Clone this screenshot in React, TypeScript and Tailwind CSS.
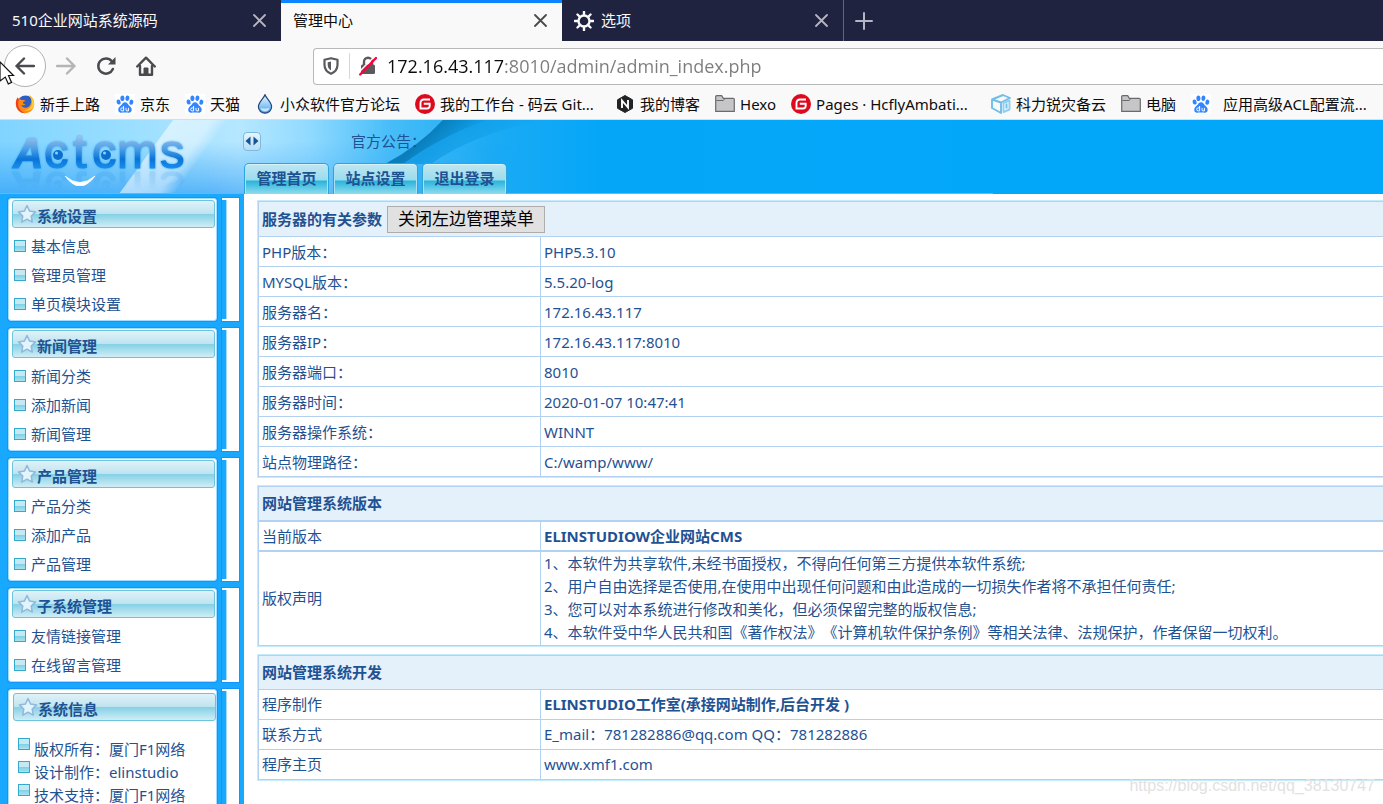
import React from "react";

function Close({ dark }: { dark?: boolean }) {
  return (
    <button aria-label="关闭标签页" className="flex size-5 items-center justify-center">
      <svg width="13" height="13" viewBox="0 0 13 13" stroke={dark ? "#4a4a4f" : "#b5b5c4"} strokeWidth="1.8" strokeLinecap="round">
        <path d="M1 1l11 11M12 1L1 12" />
      </svg>
    </button>
  );
}

function Firefox() {
  return (
    <svg width="20" height="20" viewBox="0 0 20 20">
      <circle cx="10.500" cy="9.500" r="8" fill="#2b5fc4" />
      <path d="M2.500 3.500C1 6 .6 8.500 1 11.200 1.800 16 5.600 19.200 10 19.200c5.200 0 9-4 9.200-9C19.300 6 17 2.500 13.500 1c2 2 2.900 4.300 2.700 6.800-.4 4-3 6.200-6 6-2.200-.2-3.600-1.400-4-3 1.500.9 3 .6 4.300-.4-1.300 0-2.700-.9-2.500-2.200.6-.8 1.800-.7 2.500-1.200-.6-.9-2.200-1.200-3.400-1C5.500 5.500 3.500 5 2.500 3.500z" fill="#ff8a16" />
      <path d="M13.500 1c2.800 2.200 4 5.500 3.300 9-.7 3.300-3.600 6-7.500 6.200 4.500 1.500 9.500-1 9.900-6C19.400 6 17 2.500 13.500 1z" fill="#ffcb2e" />
      <path d="M2.500 3.500C1 6 .6 8.500 1 11.200 1.800 16 5.600 19.200 10 19.200 6 17.500 3 14 3.200 9.500c0-2 .6-3 .9-4z" fill="#f0401f" />
    </svg>
  );
}

function Baidu() {
  return (
    <svg width="20" height="20" viewBox="0 0 20 20" className="bg-white" fill="#3385ff">
      <ellipse cx="3.6" cy="8" rx="2" ry="2.6" transform="rotate(-15 3.6 8)" />
      <ellipse cx="7.4" cy="4.2" rx="2" ry="2.8" />
      <ellipse cx="12.4" cy="4.2" rx="2" ry="2.8" transform="rotate(10 12.4 4.2)" />
      <ellipse cx="16.4" cy="8.2" rx="2" ry="2.6" transform="rotate(15 16.4 8)" />
      <path d="M10 8.200c2.200 0 2.600 1.800 4 3.200 1.600 1.500 3.200 2.600 2.600 5-.6 2.400-3 2.500-4.600 2.200-1.500-.3-2.800-.3-4 0-1.800.4-4.200.2-4.700-2.200-.4-2.300 1-3.400 2.600-4.900C7.300 10 7.900 8.200 10 8.200z" />
      <path d="M8.600 12v4.900H7.200a1.500 1.500 0 010-3h1.400M11 13.900v2q0 1 1 1h1.400v-3" fill="none" stroke="#fff" strokeWidth="1" />
    </svg>
  );
}

function Drop() {
  return (
    <svg width="20" height="20" viewBox="0 0 20 20">
      <defs>
        <linearGradient id="drop" x1="0" y1="0" x2="0" y2="1">
          <stop offset="0" stopColor="#eaf6ff" />
          <stop offset="0.600" stopColor="#8cc8f4" />
          <stop offset="1" stopColor="#3f8fdc" />
        </linearGradient>
      </defs>
      <path d="M10 .8c1.200 3.800 6.600 7.400 6.600 12a6.600 6.400 0 01-13.200 0c0-4.600 5.400-8.200 6.600-12z" fill="url(#drop)" stroke="#24467e" strokeWidth="1.200" />
      <path d="M5.500 13.500c2 1.400 7 1.400 9 0-.4 2.600-2.200 4-4.500 4s-4.100-1.400-4.500-4z" fill="#bfe6ff" />
    </svg>
  );
}

function Gitee() {
  return (
    <svg width="20" height="20" viewBox="0 0 20 20">
      <circle cx="10" cy="10" r="10" fill="#dd0a1e" />
      <path d="M15 5.500H9Q5.500 5.500 5.500 9v5.500h6.500q2.700 0 2.700-2.700V9.800H8.800" fill="none" stroke="#fff" strokeWidth="1.900" />
    </svg>
  );
}

function Hexagon() {
  return (
    <svg width="20" height="20" viewBox="0 0 20 20">
      <path d="M10 1.500l7.500 4.300v8.500L10 18.500l-7.500-4.200V5.800z" fill="#222325" stroke="#222325" strokeLinejoin="round" />
      <path d="M7 14V6.500l6 7V6" fill="none" stroke="#fff" strokeWidth="1.900" />
    </svg>
  );
}

function Folder() {
  return (
    <svg width="20" height="20" viewBox="0 0 20 20">
      <path d="M.7 17.300V2.700q0-1 1-1h5l1.600 2.600h10q1 0 1 1v12z" fill="#c6c6c8" stroke="#6b6b6e" strokeWidth="1.200" />
      <path d="M1.300 6.500h7l1.200-1.500" fill="none" stroke="#6b6b6e" />
    </svg>
  );
}

function Cube() {
  return (
    <svg width="20" height="20" viewBox="0 0 20 20" fill="none" stroke="#6fbfe8" strokeWidth="1.900" strokeLinejoin="round">
      <path d="M1 5.500L12 1l7 3-9 4.500zM1 5.500V14l9 5V8.500" />
      <path d="M12.500 18V9l6-2.500v9z" stroke="#8fcff0" />
      <path d="M15.500 9.500v5" />
    </svg>
  );
}

type BookmarkProps = { icon: React.ReactNode; wide?: boolean; spaced?: boolean; children: React.ReactNode };

function Bookmark({ icon, wide, spaced, children }: BookmarkProps) {
  return (
    <a href="#" className={`flex shrink-0 items-center ${spaced ? "gap-3" : "gap-[5px]"} ${wide ? "min-w-[185px]" : ""}`}>
      {icon}
      <span>{children}</span>
    </a>
  );
}

function BrowserChrome() {
  return (
    <div className="shrink-0 bg-[#f9f9fa] text-[#0c0c0d]">
      <div className="flex h-[41px] bg-[#202340] text-[15px] text-[#f9f9fa]">
        <div className="flex w-[281px] items-center justify-between px-3">
          <span className="pb-[2px]">510企业网站系统源码</span>
          <Close />
        </div>
        <div className="flex w-[281px] items-center justify-between border-t-[3px] border-[#0a84ff] bg-[#f9f9fa] px-3 pb-[3px] text-[#0c0c0d]">
          <span className="pb-[2px]">管理中心</span>
          <Close dark />
        </div>
        <div className="flex w-[282px] items-center border-r border-[#62657c] px-3">
          <svg width="20" height="20" viewBox="0 0 20 20" fill="none" stroke="#f9f9fa">
            <circle cx="10" cy="10" r="5.500" strokeWidth="2.400" />
            <path d="M10 .8v3M10 16.200v3M.8 10h3M16.200 10h3M3.500 3.500l2 2M14.500 14.500l2 2M16.500 3.500l-2 2M5.500 14.500l-2 2" strokeWidth="2.400" strokeLinecap="round" />
          </svg>
          <span className="ml-[7px] flex-1 pb-[2px]">选项</span>
          <Close />
        </div>
        <button aria-label="新建标签页" className="flex w-10 items-center justify-center">
          <svg width="18" height="18" viewBox="0 0 18 18" stroke="#b5b5c4" strokeWidth="2" strokeLinecap="round">
            <path d="M9 1v16M1 9h16" />
          </svg>
        </button>
      </div>
      <div className="flex h-[50px] items-center">
        <nav className="relative flex h-full w-[313px] items-center gap-5 pl-1">
          <button aria-label="后退" className="flex size-[42px] items-center justify-center rounded-full border border-[#b1b1b3] bg-white">
            <svg width="20" height="18" viewBox="0 0 20 18" fill="none" stroke="#4a4a4f" strokeWidth="2.400" strokeLinecap="round" strokeLinejoin="round">
              <path d="M19 9H1.500M9 1.500L1.500 9 9 16.500" />
            </svg>
          </button>
          <button aria-label="前进" className="-ml-[10px]">
            <svg width="20" height="18" viewBox="0 0 20 18" fill="none" stroke="#b5b5b7" strokeWidth="2.400" strokeLinecap="round" strokeLinejoin="round">
              <path d="M1 9h17.500M11 1.500L18.500 9 11 16.500" />
            </svg>
          </button>
          <button aria-label="重新载入">
            <svg width="20" height="20" viewBox="0 0 20 20" fill="none" stroke="#4a4a4f" strokeWidth="2.500" strokeLinecap="round">
              <path d="M15.800 5.200A7.600 7.600 0 1016.900 13" />
              <path d="M19.500 1v7.500H12z" fill="#4a4a4f" stroke="none" />
            </svg>
          </button>
          <button aria-label="主页">
            <svg width="20" height="20" viewBox="0 0 20 20" fill="none" stroke="#4a4a4f" strokeLinejoin="round" strokeLinecap="round">
              <path d="M1.200 10.500L10 1.700l8.800 8.800" strokeWidth="2.400" />
              <path d="M4 10v8.700h12V10" strokeWidth="2.400" />
              <path d="M8 18v-6h4v6z" fill="#4a4a4f" strokeWidth="1" />
            </svg>
          </button>
          <svg className="absolute top-5 left-0" width="16" height="26" viewBox="0 0 16 26">
            <path d="M0 1l13.500 13.500H8.500l3 7-3.200 1.400-3-6.800L0 20z" fill="#fff" stroke="#111" strokeWidth="1.200" />
          </svg>
        </nav>
        <div className="flex h-[37px] flex-1 items-center rounded-l-sm border border-r-0 border-[#b8b8ba] bg-white pl-[9px]">
          <svg width="16" height="18" viewBox="0 0 16 18">
            <path d="M8 1.200l6.500 1.600v5c0 4.500-2.500 7.300-6.500 9-4-1.700-6.500-4.500-6.500-9v-5z" fill="none" stroke="#5a5a5e" strokeWidth="2.200" strokeLinejoin="round" />
            <path d="M8 4.500v9c-2.300-1.400-3.300-3-3.300-5.700V5.200z" fill="#5a5a5e" />
          </svg>
          <span className="mr-[9px] ml-[10px] h-[26px] w-px bg-[#d7d7db]" />
          <svg width="18" height="20" viewBox="0 0 18 20">
            <path d="M5 9V5.800a4 4 0 018 0V9" fill="none" stroke="#5a5a5e" strokeWidth="2.400" />
            <rect x="2" y="8.500" width="14" height="9.500" rx="1.500" fill="#5a5a5e" />
            <path d="M0 16L15 1" stroke="#fff" strokeWidth="1.500" />
            <path d="M1.200 18.500L17 2" stroke="#ff0039" strokeWidth="2.400" strokeLinecap="round" />
          </svg>
          <input
            aria-label="网址"
            defaultValue="172.16.43.117:8010/admin/admin_index.php"
            className="ml-[10px] min-w-0 flex-1 bg-[linear-gradient(90deg,#0c0c0d_117px,#7c7c7c_117px)] bg-clip-text font-['Open_Sans',sans-serif] text-[18px] text-transparent outline-none"
          />
        </div>
      </div>
      <div className="flex h-[29px] items-center gap-[15px] overflow-hidden border-b border-[#dcdcde] pb-[2px] pl-[15px] text-[15px] whitespace-nowrap">
        <Bookmark icon={<Firefox />}>新手上路</Bookmark>
        <Bookmark icon={<Baidu />}>京东</Bookmark>
        <Bookmark icon={<Baidu />}>天猫</Bookmark>
        <Bookmark icon={<Drop />}>小众软件官方论坛</Bookmark>
        <Bookmark wide icon={<Gitee />}>我的工作台 - 码云 Git...</Bookmark>
        <Bookmark icon={<Hexagon />}>我的博客</Bookmark>
        <Bookmark icon={<Folder />}>Hexo</Bookmark>
        <Bookmark wide icon={<Gitee />}>Pages · HcflyAmbati...</Bookmark>
        <Bookmark icon={<Cube />}>科力锐灾备云</Bookmark>
        <Bookmark icon={<Folder />}>电脑</Bookmark>
        <Bookmark spaced icon={<Baidu />}>应用高级ACL配置流...</Bookmark>
      </div>
    </div>
  );
}

function HeaderBackdrop() {
  return (
    <svg className="absolute inset-0 size-full" viewBox="0 0 1383 74" preserveAspectRatio="xMinYMin slice">
      <defs>
        <linearGradient id="sky" gradientUnits="userSpaceOnUse" x1="0" y1="0" x2="1000" y2="0">
          <stop offset="0" stopColor="#80d4ff" />
          <stop offset="0.120" stopColor="#98deff" />
          <stop offset="0.240" stopColor="#b6e7ff" />
          <stop offset="0.310" stopColor="#90daff" />
          <stop offset="0.390" stopColor="#47bdf8" />
          <stop offset="0.490" stopColor="#1cabf4" />
          <stop offset="0.600" stopColor="#05a6f8" />
          <stop offset="1" stopColor="#03a7f9" />
        </linearGradient>
        <linearGradient id="shade" x1="0" y1="0" x2="0" y2="1">
          <stop offset="0.300" stopColor="#1f95f5" stopOpacity="0" />
          <stop offset="1" stopColor="#1f95f5" stopOpacity="0.600" />
        </linearGradient>
        <linearGradient id="shadeFade" x1="0" y1="0" x2="1" y2="0">
          <stop offset="0.400" stopColor="#fff" />
          <stop offset="1" stopColor="#fff" stopOpacity="0" />
        </linearGradient>
        <mask id="shadeMask">
          <rect width="520" height="74" fill="url(#shadeFade)" />
        </mask>
        <linearGradient id="beam" gradientUnits="userSpaceOnUse" x1="150" y1="33" x2="186" y2="59">
          <stop offset="0" stopColor="#fff" stopOpacity="0.550" />
          <stop offset="0.700" stopColor="#fff" stopOpacity="0.450" />
          <stop offset="1" stopColor="#fff" stopOpacity="0" />
        </linearGradient>
        <linearGradient id="streak" gradientUnits="userSpaceOnUse" x1="424" y1="18" x2="446" y2="40">
          <stop offset="0" stopColor="#0878b4" stopOpacity="0.850" />
          <stop offset="0.600" stopColor="#0a8ed2" stopOpacity="0.750" />
          <stop offset="1" stopColor="#0a9ce6" stopOpacity="0.500" />
        </linearGradient>
        <linearGradient id="streakGlow" gradientUnits="userSpaceOnUse" x1="440" y1="20" x2="480" y2="60">
          <stop offset="0" stopColor="#0795e0" stopOpacity="0.700" />
          <stop offset="1" stopColor="#0795e0" stopOpacity="0" />
        </linearGradient>
      </defs>
      <rect width="1383" height="74" fill="url(#sky)" />
      <rect width="520" height="74" fill="url(#shade)" mask="url(#shadeMask)" />
      <path d="M173 0h54l-54 74h-54z" fill="url(#beam)" />
      <path d="M443 0h100q-70 14-112 44h-46q34-18 58-44z" fill="url(#streakGlow)" />
      <path d="M443 0h44q-46 16-84 44h-18q34-18 58-44z" fill="url(#streak)" />
      <rect y="73" width="993" height="1" fill="#6fb3ea" />
    </svg>
  );
}

function Logo() {
  return (
    <svg
      className="ml-2 overflow-visible [-webkit-box-reflect:below_0px_linear-gradient(transparent_60%,rgba(0,0,0,0.22))]"
      width="180"
      height="50"
      viewBox="8 0 180 50"
      role="img"
      aria-label="Actcms"
    >
      <defs>
        <linearGradient id="logo" gradientUnits="userSpaceOnUse" x1="0" y1="16" x2="0" y2="49">
          <stop offset="0" stopColor="#a6bfe8" />
          <stop offset="0.400" stopColor="#4a9ee6" />
          <stop offset="0.700" stopColor="#0a74d8" />
          <stop offset="1" stopColor="#1b8fee" />
        </linearGradient>
      </defs>
      <text
        y="48"
        fill="url(#logo)"
        stroke="url(#logo)"
        strokeWidth="1.200"
        strokeLinejoin="round"
        className="font-['Liberation_Sans',sans-serif] text-[49px] drop-shadow-[0_0_1px_#2fa8f0]"
      >
        <tspan x="13" className="text-[42px] font-bold italic">A</tspan>
        <tspan x="44 73 92 117 160">ctcms</tspan>
      </text>
      <circle cx="58" cy="35" r="5" fill="#0b6fd0" />
      <circle cx="106" cy="35" r="5" fill="#0b6fd0" />
      <circle cx="56.500" cy="33" r="1.500" fill="#8fd0ff" />
      <circle cx="104.500" cy="33" r="1.500" fill="#8fd0ff" />
    </svg>
  );
}

function Star() {
  return (
    <svg className="ml-1 shrink-0" width="20" height="20" viewBox="0 0 20 20">
      <path d="M10 1.500l2.600 5.600 6 .8-4.400 4.200 1.100 6-5.300-2.900-5.300 2.900 1.100-6L1.400 7.900l6-.8z" fill="#e2f4fc" stroke="#92b8dc" strokeWidth="1.500" strokeLinejoin="round" />
    </svg>
  );
}

function Bullet() {
  return <span className="size-3 shrink-0 border border-[#35a9cc] bg-[linear-gradient(#c4e9f4_0_45%,#7dd0e4_50%,#a9e2ef)]" />;
}

function SidePanel({ title, last, children }: { title: string; last?: boolean; children: React.ReactNode }) {
  return (
    <section className={`flex gap-[5px] ${last ? "flex-1" : ""}`}>
      <div className={`w-[209px] rounded-[3px] border border-[#a3dcff] bg-white pb-[2px] shadow-[0_0_0_1px_#1593fb] ${last ? "pt-[3px] pr-0 pl-1" : "pt-px pr-px pl-[3px]"}`}>
        <h2 className="flex h-7 items-center rounded-[3px] border border-[#6cc3dc] bg-[linear-gradient(#e0f2f8,#bfe4f0_48%,#86d1e6_52%,#d0edf5)] text-[15px] font-bold">
          <Star />
          <span className="pt-1">{title}</span>
        </h2>
        {children}
      </div>
      <div className="flex w-[17px] flex-col items-end shadow-[0_0_0_1px_#1593fb]">
        <div className="h-[2px] w-full bg-white" />
        <div className="w-[13px] flex-1 border-l border-[#a3dcff] bg-white" />
        <div className="h-[2px] w-full bg-white" />
      </div>
    </section>
  );
}

function Menu({ title, items }: { title: string; items: string[] }) {
  return (
    <SidePanel title={title}>
      <ul className="pt-[3px]">
        {items.map((item) => (
          <li key={item} className="flex h-[29px] items-center gap-[5px] pl-[2px]">
            <Bullet />
            <a href="#">{item}</a>
          </li>
        ))}
      </ul>
    </SidePanel>
  );
}

const MENUS = [
  { title: "系统设置", items: ["基本信息", "管理员管理", "单页模块设置"] },
  { title: "新闻管理", items: ["新闻分类", "添加新闻", "新闻管理"] },
  { title: "产品管理", items: ["产品分类", "添加产品", "产品管理"] },
  { title: "子系统管理", items: ["友情链接管理", "在线留言管理"] },
];

const CREDITS = ["版权所有：厦门F1网络", "设计制作：elinstudio", "技术支持：厦门F1网络"];

const SERVER = [
  ["PHP版本：", "PHP5.3.10"],
  ["MYSQL版本：", "5.5.20-log"],
  ["服务器名：", "172.16.43.117"],
  ["服务器IP：", "172.16.43.117:8010"],
  ["服务器端口：", "8010"],
  ["服务器时间：", "2020-01-07 10:47:41"],
  ["服务器操作系统：", "WINNT"],
  ["站点物理路径：", "C:/wamp/www/"],
];

const LICENSE = [
  "1、本软件为共享软件,未经书面授权，不得向任何第三方提供本软件系统;",
  "2、用户自由选择是否使用,在使用中出现任何问题和由此造成的一切损失作者将不承担任何责任;",
  "3、您可以对本系统进行修改和美化，但必须保留完整的版权信息;",
  "4、本软件受中华人民共和国《著作权法》《计算机软件保护条例》等相关法律、法规保护，作者保留一切权利。",
];

function InfoTable({ heading, thick, children }: { heading: React.ReactNode; thick?: boolean; children: React.ReactNode }) {
  return (
    <div className="-mr-2 border border-[#c4ecfd]">
      <table className="w-full table-fixed border-collapse border border-[#b3d2f2]">
        <colgroup>
          <col className="w-[282px]" />
          <col />
        </colgroup>
        <thead>
          <tr className={thick ? "border-b-2 border-[#b3d2f2]" : "border-b border-[#b3d2f2]"}>
            <th colSpan={2} className="h-[34px] bg-[#e4f0fa] px-[3px] text-left font-bold">
              {heading}
            </th>
          </tr>
        </thead>
        <tbody>{children}</tbody>
      </table>
    </div>
  );
}

function Row({ label, thick, children }: { label: string; thick?: boolean; children: React.ReactNode }) {
  return (
    <tr className={thick ? "border-b-2 border-[#b3d2f2]" : "border-b border-[#b3d2f2]"}>
      <th scope="row" className="h-[30px] border-r border-[#b3d2f2] px-[3px] text-left font-normal">
        {label}
      </th>
      <td className="px-[3px]">{children}</td>
    </tr>
  );
}

export default function App() {
  return (
    <div className="flex h-screen flex-col overflow-hidden bg-white font-['Noto_Sans','Noto_Sans_CJK_SC',sans-serif] text-[15px] leading-[22px] text-[#1f5293] [text-spacing-trim:space-all]">
      <BrowserChrome />
      <header className="relative flex h-[74px] shrink-0 overflow-hidden">
        <HeaderBackdrop />
        <div className="relative w-[243px] shrink-0">
          <Logo />
          <svg className="absolute top-[54px] left-16" width="32" height="12" viewBox="0 0 32 12">
            <path d="M1 2q15 13 30 0-15 20-30 0z" fill="#fff" stroke="#fff" strokeWidth="0.800" />
          </svg>
        </div>
        <div className="relative flex flex-col justify-between pt-[10px]">
          <div className="flex items-center gap-[90px]">
            <button aria-label="切换左侧菜单" className="flex h-[19px] w-[18px] items-center justify-center rounded-sm border border-[#7fb9dd] bg-[linear-gradient(#e6f6fd,#b5def3)]">
              <svg width="14" height="10" viewBox="0 0 14 10" fill="#15559c">
                <path d="M5.500 .5v9L.5 5zM8.500 .5v9l5-4.500z" />
              </svg>
            </button>
            <span>官方公告：</span>
          </div>
          <nav className="flex gap-1 pl-px font-bold">
            {["管理首页", "站点设置", "退出登录"].map((tab) => (
              <a
                key={tab}
                href="#"
                className="flex h-[31px] w-[85px] items-center justify-center rounded-t-[5px] border border-b-0 border-[#2fa4da] bg-[linear-gradient(#bfe6f2,#9adcec_54%,#27b4dc_56%,#8fdcee)] pb-[2px] shadow-[inset_0_1px_0_#d8f2fa,inset_1px_0_0_#a9e2f2,inset_-1px_0_0_#a9e2f2]"
              >
                {tab}
              </a>
            ))}
          </nav>
        </div>
      </header>
      <div className="flex min-h-0 flex-1">
        <aside className="flex w-[244px] shrink-0 flex-col gap-[7px] overflow-hidden bg-[#18a9ff] pt-1 pl-2">
          {MENUS.map((menu) => (
            <Menu key={menu.title} title={menu.title} items={menu.items} />
          ))}
          <SidePanel title="系统信息" last>
            <ul className="pt-[17px] pl-[5px]">
              {CREDITS.map((line) => (
                <li key={line} className="flex h-[23px] items-start gap-1">
                  <Bullet />
                  <span>{line}</span>
                </li>
              ))}
            </ul>
          </SidePanel>
        </aside>
        <main className="flex min-w-0 flex-1 flex-col gap-[7px] overflow-hidden pt-[6px] pl-[13px]">
          <InfoTable
            heading={
              <div className="flex h-[34px] items-center gap-[5px]">
                <span>服务器的有关参数</span>
                <button className="h-[27px] w-[158px] border border-[#adadad] bg-[#e1e1e1] text-[17px] font-normal text-black">关闭左边管理菜单</button>
              </div>
            }
          >
            {SERVER.map(([label, value]) => (
              <Row key={label} label={label}>
                {value}
              </Row>
            ))}
          </InfoTable>
          <InfoTable thick heading="网站管理系统版本">
            <Row thick label="当前版本">
              <b>ELINSTUDIOW企业网站CMS</b>
            </Row>
            <Row label="版权声明">
              <ol className="pb-px leading-[23px] whitespace-nowrap">
                {LICENSE.map((line) => (
                  <li key={line}>{line}</li>
                ))}
              </ol>
            </Row>
          </InfoTable>
          <InfoTable heading="网站管理系统开发">
            <Row label="程序制作">
              <b>ELINSTUDIO工作室(承接网站制作,后台开发 )</b>
            </Row>
            <Row label="联系方式">E_mail：781282886@qq.com QQ：781282886</Row>
            <Row label="程序主页">www.xmf1.com</Row>
          </InfoTable>
        </main>
      </div>
      <div className="absolute right-2 bottom-[7px] font-['Liberation_Sans',sans-serif] text-[16px] text-[#e2e2e2]">https://blog.csdn.net/qq_38130747</div>
    </div>
  );
}
